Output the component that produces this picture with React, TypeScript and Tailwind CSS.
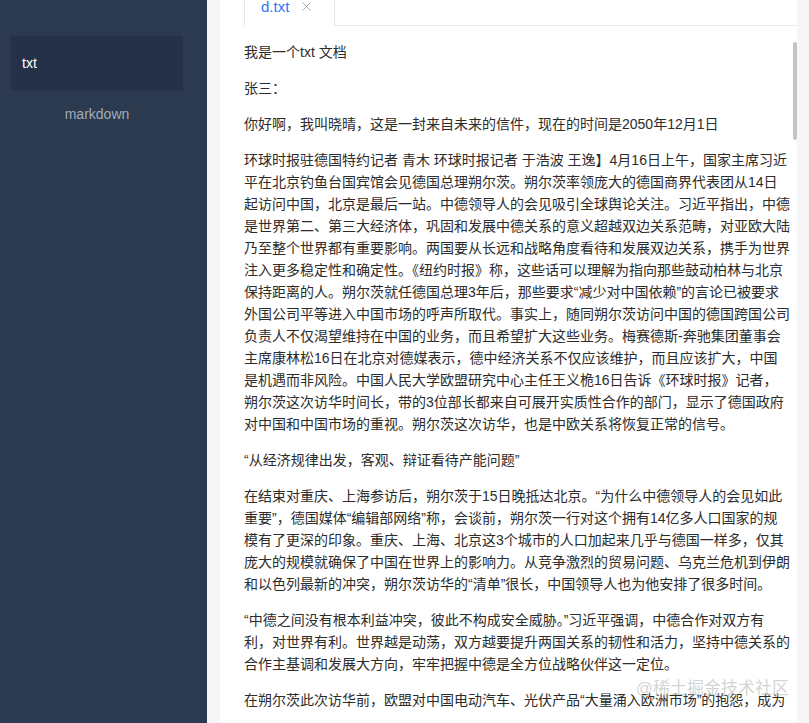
import { X } from 'lucide-react';

const paragraphs = [
  '我是一个txt 文档',
  '张三：',
  '你好啊，我叫晓晴，这是一封来自未来的信件，现在的时间是2050年12月1日',
  '环球时报驻德国特约记者 青木 环球时报记者 于浩波 王逸】4月16日上午，国家主席习近平在北京钓鱼台国宾馆会见德国总理朔尔茨。朔尔茨率领庞大的德国商界代表团从14日起访问中国，北京是最后一站。中德领导人的会见吸引全球舆论关注。习近平指出，中德是世界第二、第三大经济体，巩固和发展中德关系的意义超越双边关系范畴，对亚欧大陆乃至整个世界都有重要影响。两国要从长远和战略角度看待和发展双边关系，携手为世界注入更多稳定性和确定性。《纽约时报》称，这些话可以理解为指向那些鼓动柏林与北京保持距离的人。朔尔茨就任德国总理3年后，那些要求“减少对中国依赖”的言论已被要求外国公司平等进入中国市场的呼声所取代。事实上，随同朔尔茨访问中国的德国跨国公司负责人不仅渴望维持在中国的业务，而且希望扩大这些业务。梅赛德斯-奔驰集团董事会主席康林松16日在北京对德媒表示，德中经济关系不仅应该维护，而且应该扩大，中国是机遇而非风险。中国人民大学欧盟研究中心主任王义桅16日告诉《环球时报》记者，朔尔茨这次访华时间长，带的3位部长都来自可展开实质性合作的部门，显示了德国政府对中国和中国市场的重视。朔尔茨这次访华，也是中欧关系将恢复正常的信号。',
  '“从经济规律出发，客观、辩证看待产能问题”',
  '在结束对重庆、上海参访后，朔尔茨于15日晚抵达北京。“为什么中德领导人的会见如此重要”，德国媒体“编辑部网络”称，会谈前，朔尔茨一行对这个拥有14亿多人口国家的规模有了更深的印象。重庆、上海、北京这3个城市的人口加起来几乎与德国一样多，仅其庞大的规模就确保了中国在世界上的影响力。从竞争激烈的贸易问题、乌克兰危机到伊朗和以色列最新的冲突，朔尔茨访华的“清单”很长，中国领导人也为他安排了很多时间。',
  '“中德之间没有根本利益冲突，彼此不构成安全威胁。”习近平强调，中德合作对双方有利，对世界有利。世界越是动荡，双方越要提升两国关系的韧性和活力，坚持中德关系的合作主基调和发展大方向，牢牢把握中德是全方位战略伙伴这一定位。',
  '在朔尔茨此次访华前，欧盟对中国电动汽车、光伏产品“大量涌入欧洲市场”的抱怨，成为中德关系中备受关注的话题。德国经济界人士普遍认为，应当从经济规律出发看待这一问题。',
];

const App = () => {
  return (
    <div
      className="flex h-[723px] w-[809px] overflow-hidden bg-[#f5f6f8] text-[14px]"
      style={{ fontFamily: '"Liberation Sans", "Noto Sans CJK SC", sans-serif' }}
    >
      <aside className="flex w-[207px] shrink-0 flex-col bg-[#2b3a4f] px-[11px] pt-9">
        <div className="flex h-[55px] w-[172px] items-center bg-[#243146] pl-[11px] text-white">
          txt
        </div>
        <div className="flex h-[46px] w-[172px] items-center justify-center text-[#a3abb8]">
          markdown
        </div>
      </aside>

      <main className="relative ml-[13px] flex w-[577px] shrink-0 flex-col bg-white">
        <div className="flex h-[26px] shrink-0 pl-6">
          <div className="flex h-[26px] w-[91px] items-start gap-[10px] border-x border-[#e4e7ed] pl-4 text-[#2f74f0]">
            <span className="-mt-[3px] text-[15px] leading-[20px]">d.txt</span>
            <X className="-mt-[1px] h-[15px] w-[15px] text-[#9aa0a8]" strokeWidth={1.4} />
          </div>
          <div className="h-[26px] w-[463px] border-b border-[#e4e7ed]" />
        </div>

        <div className="h-[689px] w-[572px] overflow-hidden pl-6 pt-[15px] text-[#2c2c2c]">
          {paragraphs.map((text, index) => (
            <p key={index} className="mb-[14px] w-[546px] leading-[22px]">
              {text}
            </p>
          ))}
        </div>

        <div className="absolute right-0 top-[42px] h-[98px] w-[4px] rounded-full bg-[#c4c4c4]" />

        <div className="absolute bottom-[22px] right-[8px] text-[17px] text-[#c9c9c9]/80">
          @稀土掘金技术社区
        </div>
      </main>
    </div>
  );
};

export default App;
